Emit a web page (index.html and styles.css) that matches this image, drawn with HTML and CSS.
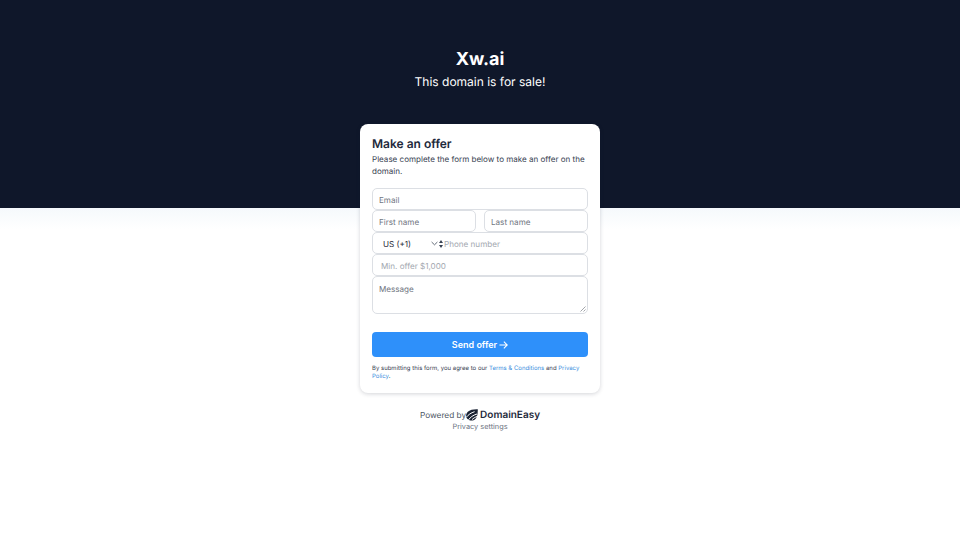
FILE: index.html
```html
<!DOCTYPE html>
<html lang="en">
<head>
<meta charset="utf-8">
<title>Xw.ai</title>
<link rel="stylesheet" href="styles.css">
</head>
<body>
<main class="page">
  <header class="hero">
    <h1 class="domain">Xw.ai</h1>
    <p class="tagline">This domain is for sale!</p>
  </header>
  <section class="card">
    <h2 class="card-title">Make an offer</h2>
    <p class="card-text">Please complete the form below to make an offer on the domain.</p>
    <form class="form">
      <div class="field"><span class="ph">Email</span></div>
      <div class="row">
        <div class="field"><span class="ph">First name</span></div>
        <div class="field"><span class="ph">Last name</span></div>
      </div>
      <div class="field phone">
        <span class="country">US (+1)</span>
        <svg class="chev" viewBox="0 0 8 5" width="7" height="5"><path d="M.7.8 4 4 7.3.8" fill="none" stroke="#4b5563" stroke-width="1"/></svg>
        <svg class="updown" viewBox="0 0 4 8" width="4" height="8"><path d="M2 0 4 3H0ZM2 8 0 5H4Z" fill="#374151"/></svg>
        <span class="ph light">Phone number</span>
      </div>
      <div class="field offer"><span class="ph light">Min. offer $1,000</span></div>
      <div class="field message">
        <span class="ph">Message</span>
        <svg class="grip" viewBox="0 0 6 6" width="6" height="6"><path d="M.5 5.500 5.500.5M3.500 5.500l2-2" stroke="#8b8f96" stroke-width=".8" fill="none"/></svg>
      </div>
      <button class="submit" type="button">Send offer
        <svg viewBox="0 0 10 10" width="9" height="10"><path d="M.5 5h8.600M5.400 1.200 9.200 5 5.400 8.800" fill="none" stroke="#fff" stroke-width="1.200"/></svg>
      </button>
    </form>
    <p class="legal">By submitting this form, you agree to our <a href="#">Terms &amp; Conditions</a> and <a href="#">Privacy</a> <a href="#">Policy</a>.</p>
  </section>
  <footer class="foot">
    <div class="powered">
      <span>Powered by</span>
      <svg class="logo" viewBox="0 0 12 12" width="12" height="12">
        <path d="M11.800.3C8 .1 3.800.8 1.800 2.800-.4 5-.5 8.700 1.800 10.300 4 12.200 7.400 12 9.400 10 10.900 8.500 11.900 5.500 11.800.3Z" fill="#1a2233"/>
        <path d="M.4 8.200C2.400 5.600 5 3.800 8.600 2.700M2.600 10.800C4.300 8.300 6.800 6.300 11 5M6 10.600C7.300 9.400 8.800 8.300 11 7.500" fill="none" stroke="#fff" stroke-width="1"/>
      </svg>
      <span class="brand">DomainEasy</span>
    </div>
    <a class="privacy" href="#">Privacy settings</a>
  </footer>
</main>
</body>
</html>
```
FILE: styles.css
```css
* { box-sizing: border-box; }
html, body { margin: 0; padding: 0; }
body {
  width: 960px;
  height: 540px;
  overflow: hidden;
  font-family: Inter, "Liberation Sans", sans-serif;
  text-rendering: geometricPrecision;
  background: #fff;
}
.page {
  height: 540px;
  display: flex;
  flex-direction: column;
  align-items: center;
  background: linear-gradient(#0f172a 0, #0f172a 208px, #f5f9fc 208px, #ffffff 229px);
}
.hero {
  height: 124px;
  padding-top: 48px;
  text-align: center;
  color: #fff;
}
.domain {
  margin: 0;
  font-size: 18px;
  line-height: 24px;
  font-weight: 700;
}
.tagline {
  margin: -1px 0 0;
  font-size: 12px;
  line-height: 22px;
  font-weight: 400;
}
.card {
  width: 240px;
  height: 269px;
  padding: 12px;
  background: #fff;
  border-radius: 8px;
  box-shadow: 0 1px 4px rgba(15, 23, 42, .18);
}
.card-title {
  margin: 0;
  font-size: 12px;
  line-height: 16px;
  font-weight: 600;
  color: #1e293b;
}
.card-text {
  margin: 1px 0 0;
  font-size: 8.050px;
  line-height: 12px;
  color: #374151;
}
.form {
  margin-top: 11px;
  display: flex;
  flex-direction: column;
}
.row {
  display: grid;
  grid-template-columns: 104px 104px;
  justify-content: space-between;
}
.field {
  height: 22px;
  border: 1px solid #dcdfe4;
  border-radius: 5px;
  padding: 1px 6px 0;
  display: flex;
  align-items: center;
  font-size: 8.100px;
  background: #fff;
}
.ph { color: #71767f; }
.ph.light { color: #a3a8b0; }
.phone { padding-left: 10px; }
.country { width: 48px; color: #1f2937; }
.updown { margin-left: 1px; margin-right: 1px; }
.offer { padding-left: 8px; }
.message {
  height: 38px;
  align-items: flex-start;
  padding-top: 7px;
  position: relative;
}
.grip { position: absolute; right: 1px; bottom: 1px; }
.submit {
  margin-top: 18px;
  height: 25px;
  border: 0;
  border-radius: 4px;
  background: #2e90fa;
  color: #fff;
  font: 600 9px Inter, "Liberation Sans", sans-serif;
  display: flex;
  align-items: center;
  justify-content: center;
  gap: 2px;
}
.legal {
  margin: 8px 0 0;
  font-size: 6px;
  line-height: 8px;
  color: #374151;
}
.legal a { color: #3b8fe0; text-decoration: none; }
.foot {
  margin-top: 15px;
  text-align: center;
}
.powered {
  display: flex;
  align-items: center;
  justify-content: center;
  height: 14px;
  font-size: 8.250px;
  color: #4b5563;
}
.brand {
  margin-left: 2px;
  font-size: 10px;
  font-weight: 600;
  color: #1e293b;
}
.privacy {
  display: block;
  font-size: 7.350px;
  line-height: 9px;
  color: #6b7280;
  text-decoration: none;
}
```
